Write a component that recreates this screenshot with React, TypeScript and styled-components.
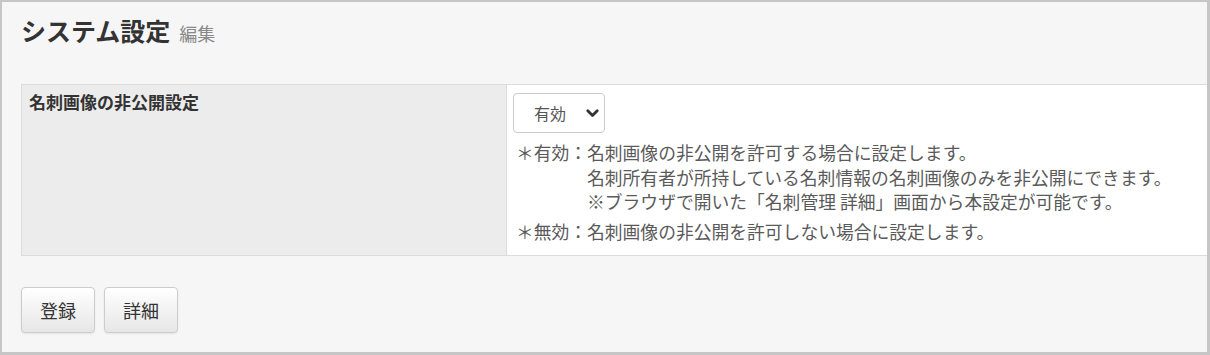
import styled, { createGlobalStyle } from "styled-components";

const GlobalStyle = createGlobalStyle`
  html, body {
    margin: 0;
    padding: 0;
    background: #ffffff;
  }
  body {
    font-family: "Noto Sans CJK JP", "Noto Sans", sans-serif;
    color: #333333;
  }
`;

interface NoteItem {
  label: string;
  lines: string[];
}

const notes: NoteItem[] = [
  {
    label: "＊有効：",
    lines: [
      "名刺画像の非公開を許可する場合に設定します。",
      "名刺所有者が所持している名刺情報の名刺画像のみを非公開にできます。",
      "※ブラウザで開いた「名刺管理 詳細」画面から本設定が可能です。",
    ],
  },
  {
    label: "＊無効：",
    lines: ["名刺画像の非公開を許可しない場合に設定します。"],
  },
];

const ChevronIcon = () => (
  <svg width="13" height="9" viewBox="0 0 13 9">
    <path
      d="M1.8 1.8 L6.5 6.5 L11.2 1.8"
      fill="none"
      stroke="#333333"
      strokeWidth="2.8"
      strokeLinecap="round"
      strokeLinejoin="round"
    />
  </svg>
);

const App = () => {
  return (
    <>
      <GlobalStyle />
      <Frame>
        <Header>
          <Title>システム設定</Title>
          <SubTitle>編集</SubTitle>
        </Header>
        <SettingTable>
          <tbody>
            <tr>
              <LabelCell>名刺画像の非公開設定</LabelCell>
              <ValueCell>
                <SelectWrap>
                  <Select defaultValue="1">
                    <option value="1">有効</option>
                    <option value="0">無効</option>
                  </Select>
                  <SelectArrow>
                    <ChevronIcon />
                  </SelectArrow>
                </SelectWrap>
                <NoteList>
                  {notes.map(note => (
                    <NoteRow key={note.label}>
                      <NoteLabel>{note.label}</NoteLabel>
                      <NoteBody>
                        {note.lines.map(line => (
                          <div key={line}>{line}</div>
                        ))}
                      </NoteBody>
                    </NoteRow>
                  ))}
                </NoteList>
              </ValueCell>
            </tr>
          </tbody>
        </SettingTable>
        <ButtonBar>
          <Button>登録</Button>
          <Button>詳細</Button>
        </ButtonBar>
      </Frame>
    </>
  );
};

const Frame = styled.div`
  width: 1210px;
  height: 355px;
  box-sizing: border-box;
  border: 2px solid #c6c6c6;
  border-right-width: 3px;
  border-bottom-width: 3px;
  background-color: #f6f6f6;
  padding-left: 19px;
  overflow: hidden;
`;

const Header = styled.div`
  display: flex;
  align-items: baseline;
  gap: 9px;
  padding-top: 13px;
  height: 30px;
  margin-bottom: 39px;
`;

const Title = styled.h1`
  margin: 0;
  font-size: 25px;
  font-weight: 700;
  line-height: 30px;
  color: #333333;
`;

const SubTitle = styled.span`
  font-size: 18px;
  color: #888888;
  line-height: 30px;
`;

const SettingTable = styled.table`
  width: calc(100% + 1px);
  border-collapse: collapse;
  background-color: #ffffff;
`;

const LabelCell = styled.th`
  width: 470px;
  padding: 7px 7px;
  border: 1px solid #dcdcdc;
  background-color: #ececec;
  text-align: left;
  vertical-align: top;
  font-size: 17px;
  font-weight: 700;
  line-height: 20px;
  color: #333333;
`;

const ValueCell = styled.td`
  padding: 8px 6px 12px 6px;
  border: 1px solid #dcdcdc;
  vertical-align: top;
`;

const SelectWrap = styled.div`
  position: relative;
  width: 92px;
  height: 40px;
`;

const Select = styled.select`
  appearance: none;
  width: 100%;
  height: 100%;
  box-sizing: border-box;
  padding: 0 0 0 20px;
  border: 1px solid #cccccc;
  border-radius: 4px;
  background-color: #ffffff;
  font-family: "Noto Sans CJK JP", "Noto Sans", sans-serif;
  font-size: 16px;
  color: #555555;
  outline: none;
`;

const SelectArrow = styled.span`
  position: absolute;
  right: 6px;
  top: 16px;
  display: flex;
  pointer-events: none;
`;

const NoteList = styled.div`
  display: flex;
  flex-direction: column;
  gap: 5px;
  margin-top: 7px;
  padding-left: 3px;
`;

const NoteRow = styled.div`
  display: grid;
  grid-template-columns: 71px 1fr;
  font-size: 17.8px;
  line-height: 24.5px;
  color: #5a5a5a;
`;

const NoteLabel = styled.div`
  white-space: nowrap;
`;

const NoteBody = styled.div`
  white-space: nowrap;
`;

const ButtonBar = styled.div`
  display: flex;
  gap: 9px;
  margin-top: 31px;
`;

const Button = styled.button`
  width: 74px;
  height: 46px;
  border: 1px solid #cccccc;
  border-radius: 4px;
  background: linear-gradient(#ffffff, #e6e6e6);
  box-shadow: 0 1px 2px rgba(0, 0, 0, 0.08);
  font-family: "Noto Sans CJK JP", "Noto Sans", sans-serif;
  font-size: 18px;
  color: #333333;
  padding: 0;
`;

export default App;
